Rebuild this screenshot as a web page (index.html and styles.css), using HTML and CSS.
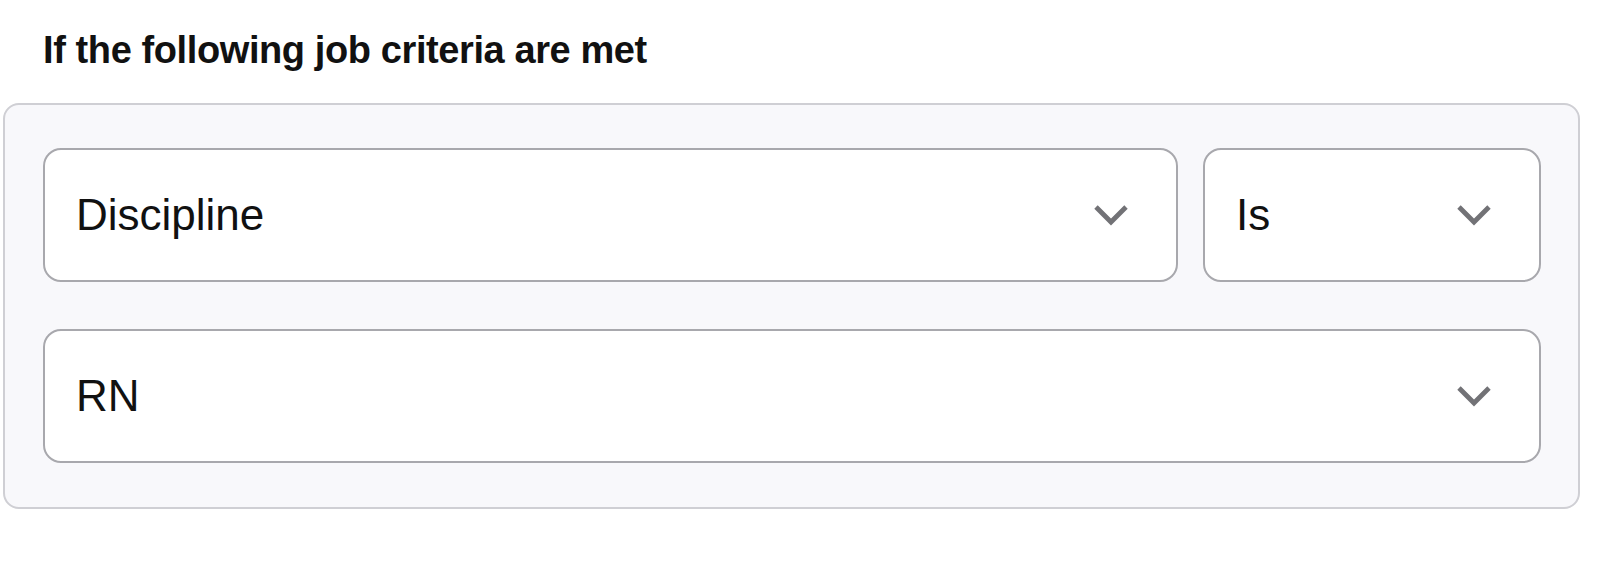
FILE: index.html
```html
<!DOCTYPE html>
<html lang="en">
<head>
  <meta charset="UTF-8">
  <meta name="viewport" content="width=device-width, initial-scale=1.0">
  <title>Job criteria</title>
  <link rel="stylesheet" href="styles.css">
</head>
<body>
  <div class="page">
    <h2 class="title">If the following job criteria are met</h2>

    <div class="criteria">
      <div class="row">
        <div class="select">
          <span>Discipline</span>
          <svg class="chevron" viewBox="0 0 36 22"><polyline points="3,3 18,18 33,3"/></svg>
        </div>
        <div class="select">
          <span>Is</span>
          <svg class="chevron" viewBox="0 0 36 22"><polyline points="3,3 18,18 33,3"/></svg>
        </div>
      </div>
      <div class="select">
        <span>RN</span>
        <svg class="chevron" viewBox="0 0 36 22"><polyline points="3,3 18,18 33,3"/></svg>
      </div>
    </div>
  </div>
</body>
</html>
```

FILE: styles.css
```css
body {
  margin: 0;
  background-color: #fff;
  font-family: 'Liberation Sans', Arial, sans-serif;
  color: #111;
}
.page {
  width: 1577px;
  padding-left: 3px;
}
.title {
  margin: 0 0 30px 40px;
  padding-top: 27px;
  font-size: 38px;
  line-height: 46px;
  font-weight: 700;
  letter-spacing: -0.4px;
  color: #111;
}
.criteria {
  display: flex;
  flex-direction: column;
  gap: 47px;
  padding: 43px 37px 44px 38px;
  background-color: #f8f8fb;
  border: 2px solid #cfcfd4;
  border-radius: 16px;
}
.row {
  display: grid;
  grid-template-columns: 1fr 338px;
  gap: 25px;
}
.select {
  display: flex;
  align-items: center;
  justify-content: space-between;
  height: 134px;
  box-sizing: border-box;
  padding: 0 47px 0 31px;
  background-color: #fff;
  border: 2px solid #a8a8ad;
  border-radius: 18px;
  font-size: 44px;
}
.chevron {
  width: 36px;
  height: 22px;
  fill: none;
  stroke: #727276;
  stroke-width: 4.8;
}
```
